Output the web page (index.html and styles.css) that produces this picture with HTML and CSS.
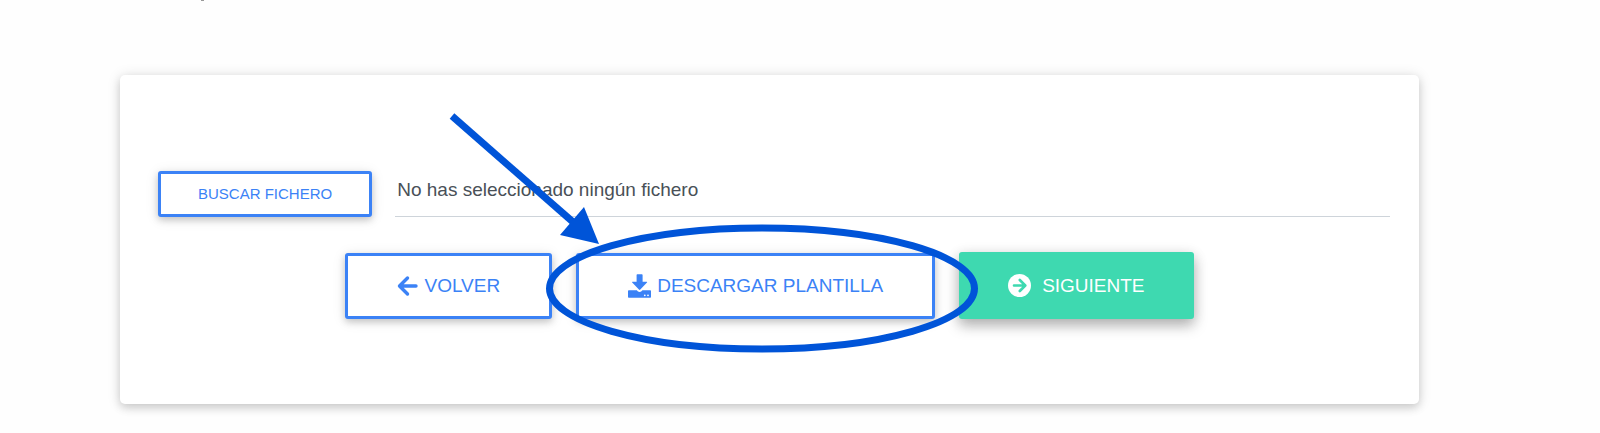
FILE: index.html
```
<!DOCTYPE html>
<html lang="es">
<head>
    <meta charset="UTF-8">
    <meta name="viewport" content="width=device-width, initial-scale=1.0">
    <title>Seleccionar fichero</title>
    <link rel="stylesheet" href="styles.css">
</head>
<body>

<header class="page-top"><span class="mark"></span></header>

<main class="card">
    <form class="upload">
        <div class="file-row">
            <button type="button" class="btn btn-small">BUSCAR FICHERO</button>
            <input type="text" class="file-name" aria-label="Fichero" value="No has seleccionado ningún fichero" readonly>
        </div>

        <div class="actions">
            <button type="button" class="btn">
                <svg class="icon" width="21" height="22" viewBox="0 0 21 22" aria-hidden="true">
                    <path d="M10.500 3 L2.500 11 L10.500 19 M3 11 H19" fill="none" stroke="currentColor" stroke-width="3.400" stroke-linecap="round" stroke-linejoin="round"/>
                </svg>
                VOLVER
            </button>

            <div class="highlight">
                <button type="button" class="btn">
                    <svg class="icon" width="23" height="24" viewBox="0 0 23 24" aria-hidden="true">
                        <path d="M9.3 0.3 h4.600 q0.700 0 0.700 0.700 V7.700 h4 q1 0.100 0.400 0.900 L12.300 15.600 q-0.700 0.600 -1.400 0 L4.200 8.600 Q3.600 7.800 4.600 7.700 h4 V1 q0 -0.700 0.700 -0.700 Z" fill="currentColor"/>
                        <path d="M0.800 16.200 h8 l0.900 1 q1.900 1.500 3.800 0 l0.900 -1 H22.200 q0.800 0 0.800 0.800 v6 q0 0.800 -0.800 0.800 H0.800 q-0.800 0 -0.800 -0.800 v-6 q0 -0.800 0.800 -0.800 Z" fill="currentColor"/>
                        <circle cx="16.800" cy="21.300" r="0.900" fill="#fff"/>
                        <circle cx="20" cy="21.300" r="0.900" fill="#fff"/>
                    </svg>
                    DESCARGAR PLANTILLA
                </button>
                <svg class="annotation" width="540" height="250" viewBox="0 0 540 250" aria-hidden="true">
                    <path d="M13 6 L134 112" stroke="#0054d8" stroke-width="7"/>
                    <path d="M160 134 L145 97 L121 125 Z" fill="#0054d8"/>
                    <ellipse cx="323" cy="178.500" rx="212.500" ry="60.500" fill="none" stroke="#0054d8" stroke-width="7"/>
                </svg>
            </div>

            <button type="submit" class="btn btn-next">
                <svg class="icon" width="23" height="23" viewBox="0 0 23 23" aria-hidden="true">
                    <circle cx="11.500" cy="11.500" r="11.500" fill="currentColor"/>
                    <path d="M11.800 6 L17.300 11.500 L11.800 17 M6 11.500 H16.800" fill="none" stroke="#3ed9b0" stroke-width="2.600" stroke-linecap="round" stroke-linejoin="round"/>
                </svg>
                SIGUIENTE
            </button>
        </div>
    </form>
</main>

</body>
</html>
```
FILE: styles.css
```
* {
    margin: 0;
    padding: 0;
    box-sizing: border-box;
    font-family: "Liberation Sans", Arial, sans-serif;
}

body {
    background: #fefefe;
    padding: 0 181px 29px 120px;
}

.page-top {
    height: 75px;
    padding-left: 81px;
}

.mark {
    display: block;
    width: 3px;
    height: 1px;
    background: #999;
}

.card {
    background: #fff;
    padding: 96px 29px 85px 38px;
    border-radius: 5px;
    box-shadow: 0 4px 8px rgba(0, 0, 0, 0.14), 0 1px 14px rgba(0, 0, 0, 0.12);
}

.file-row {
    display: flex;
    align-items: stretch;
    gap: 23px;
    margin-bottom: 35px;
}

.file-name {
    flex: 1;
    min-width: 0;
    border: none;
    border-bottom: 1px solid #ced4da;
    background: transparent;
    padding: 0 2px 8px;
    font-size: 19px;
    color: #495057;
    outline: none;
}

.actions {
    display: flex;
    justify-content: center;
    align-items: center;
    gap: 24px;
    padding-right: 9px;
}

.btn {
    display: flex;
    align-items: center;
    justify-content: center;
    gap: 6px;
    height: 66px;
    padding: 0 49px;
    border: 3px solid #3b82f6;
    border-radius: 3px;
    background: #fff;
    color: #3b82f6;
    font-size: 19px;
    white-space: nowrap;
    cursor: pointer;
    box-shadow: 0 3px 7px rgba(0, 0, 0, 0.18), 0 2px 14px rgba(0, 0, 0, 0.1);
}

.btn-small {
    height: 46px;
    padding: 0 37px 2px;
    font-size: 15px;
}

.btn-next {
    gap: 11px;
    height: 67px;
    border: none;
    background: #3ed9b0;
    color: #fff;
    box-shadow: 0 7px 14px rgba(0, 0, 0, 0.25), 0 2px 14px rgba(0, 0, 0, 0.12);
}

.icon {
    flex: none;
}

.highlight {
    position: relative;
}

/* hand drawn arrow and ring over the download button */
.annotation {
    position: absolute;
    left: -137px;
    top: -143px;
    z-index: 1;
    pointer-events: none;
}
```
